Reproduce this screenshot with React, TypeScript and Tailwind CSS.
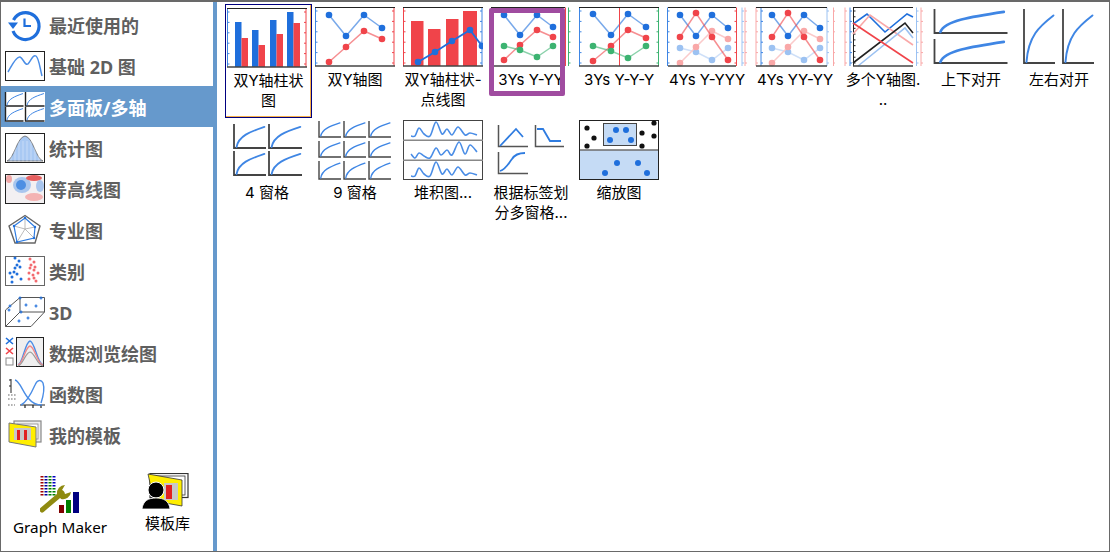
import type { ReactNode } from 'react';

const BLUE = '#1f6fdc';
const RED = '#f0444a';
const GREEN = '#3cb371';
const LIGHT_BLUE = '#9cc2f2';
const LIGHT_RED = '#f9a8a8';

type Pt = [number, number];

const Thumb = ({ children, w = 80, h = 60 }: { children: ReactNode; w?: number; h?: number }) => (
  <svg width={w} height={h} viewBox={`0 0 ${w} ${h}`} className="block shrink-0">
    {children}
  </svg>
);

// catmull-rom through the points, for the wavy stacked lines
const smooth = (pts: Pt[]) => {
  let d = `M${pts[0][0]} ${pts[0][1]}`;
  for (let i = 0; i < pts.length - 1; i++) {
    const p0 = pts[Math.max(i - 1, 0)];
    const p1 = pts[i];
    const p2 = pts[i + 1];
    const p3 = pts[Math.min(i + 2, pts.length - 1)];
    d += `C${p1[0] + (p2[0] - p0[0]) / 6} ${p1[1] + (p2[1] - p0[1]) / 6} ${p2[0] - (p3[0] - p1[0]) / 6} ${p2[1] - (p3[1] - p1[1]) / 6} ${p2[0]} ${p2[1]}`;
  }
  return d;
};

const Series = ({ pts, color, line, dot = true, width = 1.5 }: { pts: Pt[]; color: string; line?: string; dot?: boolean; width?: number }) => (
  <>
    <polyline points={pts.map((p) => p.join(',')).join(' ')} fill="none" stroke={line ?? color} strokeWidth={width} strokeOpacity={line ? 1 : 0.6} />
    {dot && pts.map((p, i) => <circle key={i} cx={p[0]} cy={p[1]} r={3.3} fill={color} />)}
  </>
);

// vertical axis with tick marks, ticks pointing to the chosen side
const Axis = ({ x, color, dir = 1, ticks = 6 }: { x: number; color: string; dir?: number; ticks?: number }) => (
  <>
    <line x1={x} y1={0.5} x2={x} y2={59} stroke={color} strokeWidth={1} />
    {Array.from({ length: ticks }).map((_, i) => {
      const y = 4 + (i * 52) / (ticks - 1);
      return <line key={i} x1={x} y1={y} x2={x + dir * 2} y2={y} stroke={color} strokeWidth={1} />;
    })}
  </>
);

const Frame = ({ x1 = 0, x2 = 80 }: { x1?: number; x2?: number }) => (
  <>
    <line x1={x1} y1={0.5} x2={x2} y2={0.5} stroke="#222" strokeWidth={1} />
    <line x1={x1} y1={59} x2={x2} y2={59} stroke="#444" strokeWidth={1.5} />
  </>
);

const Bar = ({ x, y, w, color, stroke }: { x: number; y: number; w: number; color: string; stroke?: string }) => (
  <rect x={x} y={y} width={w} height={59 - y} fill={color} stroke={stroke} strokeWidth={stroke ? 0.5 : 0} />
);

const Pane = ({ x, y, w, h, sw = 1.8, curve = 1.8, axis = '#444' }: { x: number; y: number; w: number; h: number; sw?: number; curve?: number; axis?: string }) => (
  <>
    <path d={`M${x} ${y}V${y + h}H${x + w}`} fill="none" stroke={axis} strokeWidth={sw} />
    <path
      d={`M${x + 0.08 * w} ${y + h - 1}C${x + 0.14 * w} ${y + 0.5 * h} ${x + 0.5 * w} ${y + 0.32 * h} ${x + 0.95 * w} ${y + 0.12 * h}`}
      fill="none"
      stroke="#3f86e4"
      strokeWidth={curve}
      strokeLinecap="round"
    />
  </>
);

const DualBars = () => (
  <Thumb>
    <Axis x={0.5} color="#3f86e4" />
    <Axis x={79} color={RED} dir={-1} />
    {[
      [8, 14, 30],
      [25, 22, 37],
      [43, 12, 26],
      [60, 4, 15],
    ].map(([x, a, b]) => (
      <g key={x}>
        <Bar x={x} y={a} w={6.5} color={BLUE} />
        <Bar x={x + 6.5} y={b} w={6.5} color={RED} />
      </g>
    ))}
    <Frame />
  </Thumb>
);

const DualLines = () => (
  <Thumb>
    <Axis x={0.5} color="#3f86e4" />
    <Axis x={79} color={RED} dir={-1} />
    <Series color={BLUE} pts={[[14, 8], [31, 29], [49, 8], [67, 21]]} />
    <Series color={RED} pts={[[14, 55], [31, 40], [49, 24], [67, 32]]} />
    <Frame />
  </Thumb>
);

const BarLine = () => (
  <Thumb>
    <Axis x={79} color="#3f86e4" dir={-1} />
    <Axis x={0.5} color={RED} />
    {[
      [8, 14, 12.5],
      [25, 22, 12.5],
      [43, 12, 12.5],
      [60, 4, 14],
    ].map(([x, y, w]) => (
      <Bar key={x} x={x} y={y} w={w} color={RED} />
    ))}
    <Series color={BLUE} line={BLUE} width={1.8} pts={[[15, 55], [32, 45], [49, 34], [67, 23], [79, 39]]} />
    <Frame />
  </Thumb>
);

const ThreeYs = () => (
  <Thumb>
    <Axis x={0.5} color="#3f86e4" />
    <Axis x={74.5} color={RED} dir={-1} />
    <Axis x={77.5} color={GREEN} />
    <Series color={BLUE} pts={[[13, 8], [29, 28], [46, 8], [62, 20]]} />
    <Series color={RED} pts={[[13, 53], [29, 38], [46, 23], [62, 30]]} />
    <Series color={GREEN} pts={[[13, 39], [29, 43], [46, 50], [62, 39]]} />
    <Frame x2={74} />
  </Thumb>
);

const ThreeYsSplit = () => (
  <Thumb>
    <Axis x={0.5} color="#3f86e4" />
    <Axis x={79.5} color={GREEN} dir={-1} />
    <Series color={BLUE} pts={[[14, 7], [32, 28], [49, 7], [67, 20]]} />
    <Series color={RED} pts={[[14, 54], [32, 39], [49, 23], [67, 31]]} />
    <Series color={GREEN} pts={[[14, 39], [32, 44], [49, 51], [67, 39]]} />
    <line x1={40.5} y1={0.5} x2={40.5} y2={59} stroke={RED} strokeWidth={1} />
    <Frame />
  </Thumb>
);

const FourSeries = ({ xs }: { xs: number[] }) => (
  <>
    <Series color={LIGHT_BLUE} line="#cfe0f8" pts={[[xs[0], 41], [xs[1], 45], [xs[2], 53], [xs[3], 41]]} />
    <Series color={LIGHT_RED} line="#fbcaca" pts={[[xs[0], 56], [xs[1], 40], [xs[2], 24], [xs[3], 32]]} />
    <Series color={BLUE} pts={[[xs[0], 8], [xs[1], 29], [xs[2], 8], [xs[3], 21]]} />
    <Series color={RED} pts={[[xs[0], 30], [xs[1], 6], [xs[2], 30], [xs[3], 53]]} />
  </>
);

const FourYsA = () => (
  <Thumb>
    <Axis x={0.5} color="#3f86e4" />
    <Axis x={69.5} color={RED} dir={-1} />
    <Axis x={75} color={LIGHT_BLUE} />
    <Axis x={78} color={LIGHT_RED} />
    <FourSeries xs={[13, 29, 45, 61]} />
    <Frame x1={1} x2={69} />
  </Thumb>
);

const FourYsB = () => (
  <Thumb>
    <Axis x={1} color={LIGHT_RED} />
    <Axis x={6} color="#3f86e4" />
    <Axis x={72} color={LIGHT_BLUE} />
    <Axis x={78.5} color={LIGHT_RED} />
    <FourSeries xs={[17, 33, 49, 65]} />
    <Frame x1={1} x2={72} />
  </Thumb>
);

const ManyYs = () => (
  <Thumb>
    <Axis x={2} color={LIGHT_RED} />
    <Axis x={7} color="#3f86e4" />
    <Axis x={10.5} color="#222" ticks={10} dir={1} />
    <Axis x={73.5} color={LIGHT_BLUE} />
    <Axis x={78} color={LIGHT_RED} />
    <polyline points="10,17 24,7 42,25 64,7 70,10" fill="none" stroke={BLUE} strokeWidth={1.6} />
    <polyline points="10,27 27,8 70,38" fill="none" stroke={LIGHT_RED} strokeWidth={1.6} />
    <polyline points="15,59 62,21 70,31" fill="none" stroke={LIGHT_BLUE} strokeWidth={1.6} />
    <polyline points="10,56 62,16 70,26" fill="none" stroke="#222" strokeWidth={1.6} />
    <line x1={10} y1={16} x2={70} y2={56} stroke={RED} strokeWidth={1.6} />
    <Frame x1={10} x2={70} />
  </Thumb>
);

const UpDown = () => (
  <Thumb>
    <Pane x={3.5} y={2} w={73} h={24} sw={1.8} curve={2.6} />
    <Pane x={3.5} y={32} w={73} h={24} sw={1.8} curve={2.6} />
  </Thumb>
);

const LeftRight = () => (
  <Thumb>
    <Pane x={5} y={2} w={31} h={54} sw={1.8} curve={2} />
    <Pane x={44} y={2} w={31} h={54} sw={1.8} curve={2} />
  </Thumb>
);

const FourPanes = () => (
  <Thumb>
    <Pane x={7} y={4} w={32} h={24} />
    <Pane x={42} y={4} w={33} h={24} />
    <Pane x={7} y={31} w={32} h={24} />
    <Pane x={42} y={31} w={33} h={24} />
  </Thumb>
);

const NinePanes = () => (
  <Thumb>
    {[1, 21, 41].map((y) =>
      [4, 29, 54].map((x) => <Pane key={`${x}-${y}`} x={x} y={y} w={22} h={y === 41 ? 18 : 16} sw={1.4} curve={1.4} />),
    )}
  </Thumb>
);

const Stacked = () => {
  const top: Pt[] = [[8, 16], [12, 16], [16, 8], [21, 14], [27, 16], [33, 2], [39, 14], [44, 9], [49, 15], [55, 7], [62, 15], [67, 13], [74, 15]];
  const mid: Pt[] = [[8, 34], [12, 38], [16, 33], [21, 36], [27, 38], [33, 28], [38, 35], [44, 30], [49, 35], [56, 22], [62, 34], [67, 25], [74, 32]];
  return (
    <Thumb>
      <rect x={0.5} y={0.5} width={79} height={59} fill="#fff" stroke="#444" strokeWidth={1} />
      <rect x={0} y={19.5} width={80} height={1.5} fill="#888" />
      <rect x={0} y={39.5} width={80} height={1.5} fill="#888" />
      <path d={smooth(top)} fill="none" stroke="#4a8de6" strokeWidth={1.6} />
      <path d={smooth(mid)} fill="none" stroke="#4a8de6" strokeWidth={1.6} />
      <path d={smooth(top.map(([x, y]) => [x, y + 40]))} fill="none" stroke="#4a8de6" strokeWidth={1.6} />
    </Thumb>
  );
};

const LabelSplit = () => (
  <Thumb>
    <path d="M7.5 5V26.5H37" fill="none" stroke="#555" strokeWidth={1.5} />
    <polyline points="9,26 25,9 32,17" fill="none" stroke="#2f7ce0" strokeWidth={1.8} />
    <path d="M44.5 5V26.5H73" fill="none" stroke="#555" strokeWidth={1.5} />
    <polyline points="46,9 52,9 59,21 70,21" fill="none" stroke="#2f7ce0" strokeWidth={1.8} />
    <path d="M7.5 32V53.5H37" fill="none" stroke="#555" strokeWidth={1.5} />
    <path d="M9 51C15 49 17 44 21 39C24 34 28 33 34 33" fill="none" stroke="#2f7ce0" strokeWidth={1.8} />
  </Thumb>
);

const ZoomPlot = () => (
  <Thumb>
    <rect x={0.5} y={0.5} width={79} height={59} fill="#fff" stroke="#222" strokeWidth={1} />
    <rect x={1} y={30.5} width={78} height={28.5} fill="#c5dbf5" />
    <line x1={0} y1={30} x2={80} y2={30} stroke="#222" strokeWidth={1} />
    <rect x={24.5} y={3.5} width={33} height={22} fill="#c5dbf5" stroke="#444" strokeWidth={1} />
    {[[8, 8], [15, 18], [8, 26], [75, 3], [63, 13], [75, 16], [63, 26]].map(([x, y]) => (
      <circle key={`${x}${y}`} cx={x} cy={y} r={2.6} fill="#111" />
    ))}
    {[[37, 10], [47, 10], [31, 20], [52, 20], [38, 43], [59, 43], [26, 53], [68, 53]].map(([x, y]) => (
      <circle key={`${x}${y}`} cx={x} cy={y} r={3} fill={BLUE} />
    ))}
  </Thumb>
);

const tiles: { label: string; chart: ReactNode; selected?: boolean }[] = [
  { label: '双Y轴柱状\n图', chart: <DualBars />, selected: true },
  { label: '双Y轴图', chart: <DualLines /> },
  { label: '双Y轴柱状-\n点线图', chart: <BarLine /> },
  { label: '3Ys Y-YY', chart: <ThreeYs /> },
  { label: '3Ys Y-Y-Y', chart: <ThreeYsSplit /> },
  { label: '4Ys Y-YYY', chart: <FourYsA /> },
  { label: '4Ys YY-YY', chart: <FourYsB /> },
  { label: '多个Y轴图.\n..', chart: <ManyYs /> },
  { label: '上下对开', chart: <UpDown /> },
  { label: '左右对开', chart: <LeftRight /> },
  { label: '4 窗格', chart: <FourPanes /> },
  { label: '9 窗格', chart: <NinePanes /> },
  { label: '堆积图...', chart: <Stacked /> },
  { label: '根据标签划\n分多窗格...', chart: <LabelSplit /> },
  { label: '缩放图', chart: <ZoomPlot /> },
];

// sidebar icons, 40x30
const SideIcon = ({ children }: { children: ReactNode }) => (
  <svg width={40} height={30} viewBox="0 0 40 30" className="block shrink-0 overflow-visible">
    {children}
  </svg>
);

const RecentIcon = () => (
  <SideIcon>
    <path d="M8.5 10A13.5 13.5 0 1 1 8 21" fill="none" stroke="#1f6fdc" strokeWidth={3.2} />
    <path d="M3 12.5L13 12.5L8 19Z" fill="#1f6fdc" />
    <path d="M19.5 8.5V16H26" fill="none" stroke="#1f6fdc" strokeWidth={2.2} />
  </SideIcon>
);

const BasicIcon = () => (
  <SideIcon>
    <rect x={0.5} y={0.5} width={39} height={29} fill="#fff" stroke="#222" />
    <path d="M3 21C6 16 11 5 15 6C18 7 20 15 23 13C26 10 28 3 31 5C34 7 35 18 37 25" fill="none" stroke="#4a8de6" strokeWidth={1.5} />
  </SideIcon>
);

const PanelIcon = () => (
  <SideIcon>
    <rect width={40} height={30} fill="#fff" />
    <Pane x={0.5} y={0} w={18} h={14} sw={1.4} curve={1} axis="#222" />
    <Pane x={20.5} y={0} w={19} h={14} sw={1.4} curve={1} axis="#222" />
    <Pane x={0.5} y={15} w={18} h={14} sw={1.4} curve={1} axis="#222" />
    <Pane x={20.5} y={15} w={19} h={14} sw={1.4} curve={1} axis="#222" />
  </SideIcon>
);

const StatsIcon = () => (
  <SideIcon>
    <rect x={0.5} y={0.5} width={39} height={29} fill="#fff" stroke="#222" />
    <path d="M2 28C9 26 12 4 20 3C28 4 31 26 38 28Z" fill="#a9c9f3" stroke="#666" strokeWidth={0.8} />
    {[6, 10, 14, 18, 22, 26, 30, 34].map((x) => (
      <line key={x} x1={x} y1={8} x2={x} y2={29} stroke="#fff" strokeOpacity={0.6} strokeWidth={0.6} />
    ))}
  </SideIcon>
);

const ContourIcon = () => (
  <SideIcon>
    <rect x={0.5} y={0.5} width={39} height={29} fill="#f3f0f2" stroke="#222" />
    <g className="blur-[0.5px]">
      <ellipse cx={17} cy={11} rx={9} ry={8} fill="#a9c6ee" />
      <ellipse cx={16} cy={11} rx={5} ry={5} fill="#4e8fe3" />
      <ellipse cx={35} cy={12} rx={4} ry={6} fill="#a9c6ee" />
      <ellipse cx={29} cy={4} rx={8} ry={3} fill="#e65f5f" />
      <ellipse cx={4} cy={5} rx={3} ry={4} fill="#f0a6a6" />
      <ellipse cx={29} cy={23} rx={9} ry={4} fill="#f4b3b3" />
    </g>
    <rect x={0.5} y={0.5} width={39} height={29} fill="none" stroke="#222" />
  </SideIcon>
);

const RadarIcon = () => (
  <SideIcon>
    <polygon points="20,0.5 35,11 30,28 10,28 4,11" fill="#fff" stroke="#666" strokeWidth={1.4} />
    <polygon points="20,3 30,12 29,23 12,27 9,11" fill="none" stroke="#2f7ce0" strokeWidth={1.2} />
    <path d="M20 14L20 3M20 14L30 12M20 14L29 23M20 14L12 27M20 14L9 11" stroke="#aaa" strokeWidth={0.8} />
    {[[20, 3], [30, 12], [29, 23], [12, 27], [9, 11]].map(([x, y]) => (
      <circle key={x} cx={x} cy={y} r={1.2} fill={BLUE} />
    ))}
  </SideIcon>
);

const ScatterIcon = () => (
  <SideIcon>
    <rect x={0.5} y={0.5} width={39} height={29} fill="#fff" stroke="#666" />
    {[[10, 2], [14, 5], [12, 9], [15, 11], [10, 12], [9, 16], [5, 17], [12, 18], [7, 21], [16, 23], [7, 26]].map(([x, y]) => (
      <circle key={`${x}-${y}`} cx={x} cy={y} r={1.5} fill={BLUE} />
    ))}
    {[[25, 3], [29, 6], [26, 9], [30, 11], [25, 12], [29, 14], [28, 19], [24, 17], [33, 17], [24, 23], [29, 22], [31, 25]].map(([x, y]) => (
      <circle key={`${x}-${y}`} cx={x} cy={y} r={1.5} fill="#f26a6f" />
    ))}
  </SideIcon>
);

const CubeIcon = () => (
  <SideIcon>
    <path d="M0.5 29.5L0.5 13L15 0.5H39.5V15L26 29.5Z" fill="#fff" stroke="#555" />
    <path d="M15 0.5V15H39.5M15 15L0.5 29.5" fill="none" stroke="#555" />
    {[[15, 1], [36, 1], [21, 8], [31, 9], [5, 9], [4, 13], [16, 15], [23, 21], [14, 24]].map(([x, y]) => (
      <path key={`${x}-${y}`} d={`M${x - 1.5} ${y}H${x + 1.5}M${x} ${y - 1.5}V${y + 1.5}`} stroke={BLUE} strokeWidth={1.2} />
    ))}
  </SideIcon>
);

const BrowserIcon = () => (
  <svg width={40} height={32} viewBox="0 0 40 32" className="block shrink-0">
    <path d="M1 1L8 7M8 1L1 7" stroke={BLUE} strokeWidth={1.6} />
    <path d="M1 11L8 17M8 11L1 17" stroke={RED} strokeWidth={1.6} />
    <rect x={1} y={21} width={7} height={7} fill="#fff" stroke="#888" />
    <rect x={11.5} y={0.5} width={27} height={29} fill="#efefef" stroke="#222" />
    <path d="M13 28C18 26 20 5 25 4C30 5 32 26 38 28" fill="none" stroke="#4a8de6" strokeWidth={1.4} />
    <path d="M13 28C18 27 20 10 25 9C30 10 32 27 38 28" fill="none" stroke="#f08a8a" strokeWidth={1.4} />
    <path d="M13 29C18 28 20 16 25 15C30 16 32 28 38 29" fill="none" stroke="#999" strokeWidth={1.2} />
  </svg>
);

const FunctionIcon = () => (
  <SideIcon>
    <path d="M6 0V14M4 1H6M4 7H6" stroke="#222" strokeWidth={1} />
    <path d="M15 26H40M20 26V29M28 26V29M36 26V29" stroke="#222" strokeWidth={1.2} />
    <path d="M10 1C15 2 18 14 24 20C28 25 32 26 37 26" fill="none" stroke="#4a8de6" strokeWidth={1.4} />
    <path d="M16 26C22 23 26 15 30 6C32 1 36 0 38 4C40 10 38 18 36 24" fill="none" stroke="#4a8de6" strokeWidth={1.4} />
    <path d="M3 16H12M3 20H12M3 26H10" stroke="#999" strokeWidth={1.6} strokeDasharray="1.6 1.4" />
  </SideIcon>
);

const TemplateIcon = () => (
  <SideIcon>
    <rect x={9} y={1} width={27} height={21} fill="#eee" stroke="#888" strokeWidth={1.2} />
    <rect x={12} y={4} width={21} height={15} fill="#fff" stroke="#888" strokeWidth={0.8} />
    <polygon points="4,3 31,7 31,27 4,22" fill="#ffee00" stroke="#777" strokeWidth={1} />
    <rect x={9} y={8} width={17} height={12} fill="#c8c8c8" />
    <rect x={12} y={10} width={3} height={10} fill="#e02020" />
    <rect x={19} y={10} width={3} height={10} fill="#e02020" />
  </SideIcon>
);

const GraphMakerIcon = () => {
  const cols = ['#a00000', '#0000a0', '#008000', '#0000c0'];
  return (
    <svg width={40} height={37} viewBox="0 0 40 37" className="block">
      {cols.map((c, i) =>
        [0, 3, 6, 9, 12, 15, 18].map((y) => <rect key={`${i}-${y}`} x={0.5 + i * 4} y={y} width={3} height={1.5} fill={i === 0 ? c : i === 3 && y > 9 ? '#008000' : c} />),
      )}
      <path d="M2 34L22 17" stroke="#8f8a10" strokeWidth={5} strokeLinecap="round" />
      <path d="M17 18A8 8 0 0 1 25 9L22 14L25 18L31 16A8 8 0 0 1 21 23Z" fill="#8f8a10" />
      <rect x={19} y={29} width={5} height={8} fill="#800000" />
      <rect x={26} y={24} width={5} height={13} fill="#008000" />
      <rect x={33} y={16} width={6} height={21} fill="#000080" />
    </svg>
  );
};

const LibraryIcon = () => (
  <svg width={47} height={36} viewBox="0 0 47 36" className="block">
    <rect x={8} y={0.5} width={38} height={24} fill="#fff" stroke="#333" strokeWidth={1.2} />
    <rect x={12} y={3} width={31} height={19} fill="#fff" stroke="#333" strokeWidth={0.8} />
    <polygon points="6,1 40,7 40,33 12,28" fill="#ffee00" stroke="#333" strokeWidth={0.8} />
    <rect x={22} y={10} width={14} height={17} fill="#c8c8c8" />
    <rect x={24} y={12} width={6} height={14} fill="#e02020" />
    <circle cx={14} cy={17} r={8} fill="#000" stroke="#fff" strokeWidth={1} />
    <path d="M0 36C1 28 6 25 14 25C22 25 27 28 28 36Z" fill="#000" stroke="#fff" strokeWidth={0.8} />
  </svg>
);

const sideItems: { label: string; icon: ReactNode; active?: boolean }[] = [
  { label: '最近使用的', icon: <RecentIcon /> },
  { label: '基础 2D 图', icon: <BasicIcon /> },
  { label: '多面板/多轴', icon: <PanelIcon />, active: true },
  { label: '统计图', icon: <StatsIcon /> },
  { label: '等高线图', icon: <ContourIcon /> },
  { label: '专业图', icon: <RadarIcon /> },
  { label: '类别', icon: <ScatterIcon /> },
  { label: '3D', icon: <CubeIcon /> },
  { label: '数据浏览绘图', icon: <BrowserIcon /> },
  { label: '函数图', icon: <FunctionIcon /> },
  { label: '我的模板', icon: <TemplateIcon /> },
];

export default function App() {
  return (
    <div className="relative flex h-[552px] w-[1110px] border-x border-t-2 border-b border-[#696969] bg-white font-['Noto_Sans','Noto_Sans_CJK_SC',sans-serif] text-black">
      {/* Left category list */}
      <aside className="flex w-[216px] shrink-0 flex-col border-r-4 border-[#6699cc] pt-[2px]">
        {sideItems.map((item) => (
          <div
            key={item.label}
            className={`flex h-[41px] items-center gap-1 pl-1 text-[18px] font-bold ${item.active ? 'bg-[#6699cc] text-white' : 'text-[#5f5f5f]'}`}
          >
            {item.icon}
            <span className="pt-[3px] leading-none whitespace-nowrap">{item.label}</span>
          </div>
        ))}

        <div className="mt-[18px] flex items-start">
          <div className="ml-[12px] flex w-[94px] flex-col items-center">
            <div className="mt-[3px]">
              <GraphMakerIcon />
            </div>
            <span className="mt-[4px] text-[15.3px] leading-[20px] whitespace-nowrap">Graph Maker</span>
          </div>
          <div className="ml-[34px] flex flex-col items-center">
            <LibraryIcon />
            <span className="mt-[4px] ml-[4px] text-[15px] leading-[20px] whitespace-nowrap">模板库</span>
          </div>
        </div>
      </aside>

      {/* Template grid */}
      <main className="grid flex-1 grid-cols-[repeat(10,88px)] content-start pt-[2px] pl-[6px]">
        {tiles.map((tile) => (
          <div key={tile.label} className="h-[113px] w-[88px]">
            <div className={`flex h-[114px] flex-col items-center pt-[3px] ${tile.selected ? 'ml-[2px] w-[87px] border border-[#00007f] shadow-[inset_-1px_-1px_0_#f5b04c]' : 'w-[88px]'}`}>
              <div className={tile.selected ? 'ml-[1px] self-start' : ''}>{tile.chart}</div>
              <div className="mt-[3px] text-center font-['Inter','Noto_Sans_CJK_SC',sans-serif] text-[15px] leading-[20px] whitespace-pre-line">{tile.label}</div>
            </div>
          </div>
        ))}
      </main>

      {/* Purple highlight over the 3Ys Y-YY tile */}
      <div className="absolute top-[6px] left-[488px] h-[88px] w-[76px] rounded-[2px] border-[5px] border-[#a04ca0]" />
    </div>
  );
}
